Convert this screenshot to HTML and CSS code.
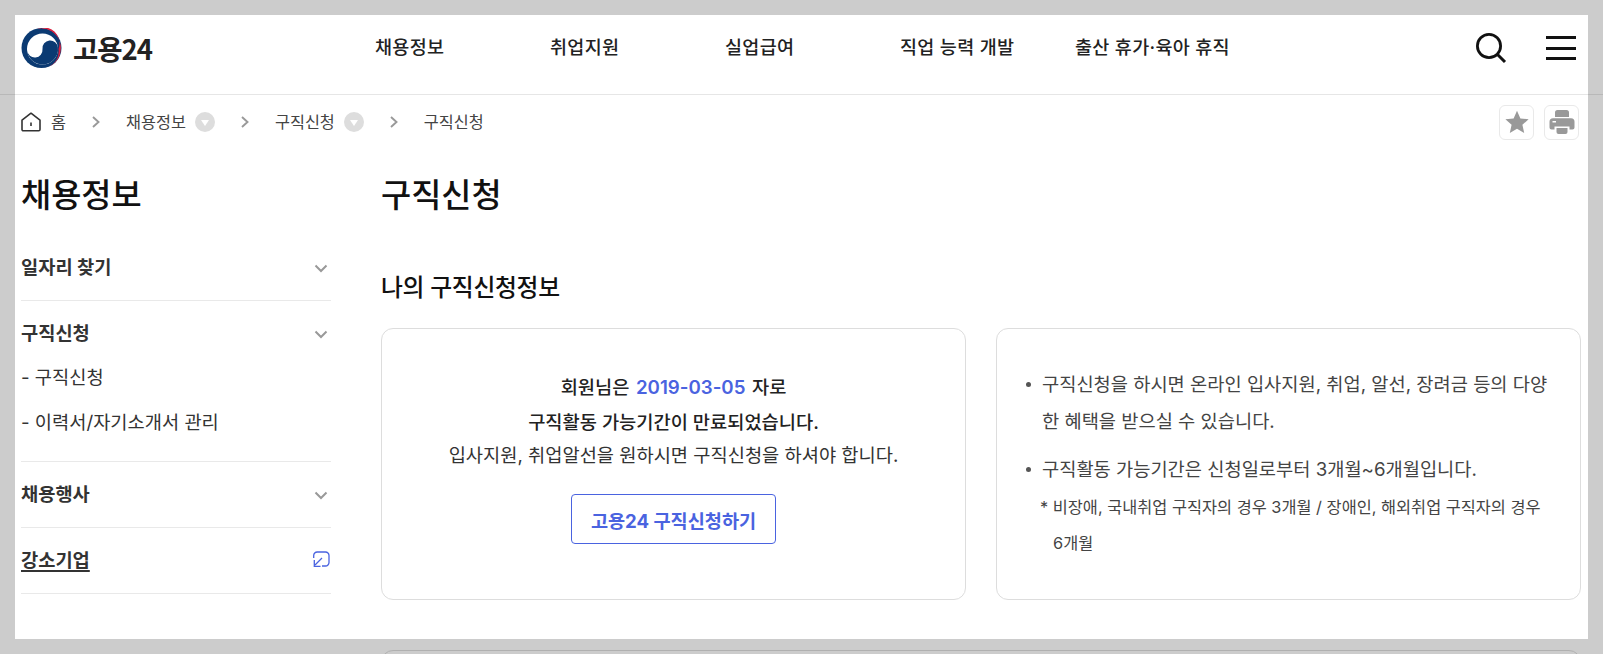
FILE: index.html
```html
<!DOCTYPE html>
<html lang="ko">
<head>
<meta charset="utf-8">
<title>구직신청 | 고용24</title>
<link rel="stylesheet" href="styles.css">
</head>
<body>
<header class="site-header">
  <a class="logo">
    <svg class="logo-mark" viewBox="0 0 40 40" aria-hidden="true">
      <circle cx="20" cy="20" r="20" fill="#0b3a72"/>
      <path d="M16 .5A20 20 0 0 1 27 38.700A16.500 16.500 0 0 0 37 21A16 16 0 0 0 16 .5Z" fill="#d9213f"/>
      <circle cx="21" cy="21" r="15.500" fill="#fff"/>
      <path d="M5.500 21A7.750 7.750 0 0 0 21 21A7.750 7.750 0 0 1 36.500 21A15.500 15.500 0 0 1 5.500 21Z" fill="#0b3a72" transform="rotate(-6 21 21)"/>
    </svg>
    <span class="logo-text">고용24</span>
  </a>
  <nav class="gnb">
    <a class="gnb-item">채용정보</a>
    <a class="gnb-item">취업지원</a>
    <a class="gnb-item">실업급여</a>
    <a class="gnb-item">직업 능력 개발</a>
    <a class="gnb-item">출산 휴가·육아 휴직</a>
  </nav>
  <div class="header-tools">
    <svg class="icon-search" viewBox="0 0 32 32" aria-hidden="true"><circle cx="14" cy="14" r="11.600" fill="none" stroke="#111" stroke-width="2.800"/><path d="M22.500 22.500L30 30" stroke="#111" stroke-width="3" fill="none"/></svg>
    <div class="hamburger"><i></i><i></i><i></i></div>
  </div>
</header>

<div class="crumb-bar">
  <div class="crumbs">
    <svg class="icon-home" viewBox="0 0 20 20" aria-hidden="true"><path d="M1 8.200L10 1.200L19 8.200V17.500A1.300 1.300 0 0 1 17.700 18.800H2.300A1.300 1.300 0 0 1 1 17.500Z" fill="none" stroke="#333" stroke-width="1.600" stroke-linejoin="round"/><path d="M10 10.500V14" stroke="#333" stroke-width="1.600"/></svg>
    <span class="crumb crumb-home">홈</span>
    <svg class="chev" viewBox="0 0 8 12" aria-hidden="true"><path d="M1 1L6.500 6L1 11" fill="none" stroke="#999" stroke-width="1.900"/></svg>
    <span class="crumb">채용정보</span><span class="crumb-dot"></span>
    <svg class="chev" viewBox="0 0 8 12" aria-hidden="true"><path d="M1 1L6.500 6L1 11" fill="none" stroke="#999" stroke-width="1.900"/></svg>
    <span class="crumb">구직신청</span><span class="crumb-dot"></span>
    <svg class="chev" viewBox="0 0 8 12" aria-hidden="true"><path d="M1 1L6.500 6L1 11" fill="none" stroke="#999" stroke-width="1.900"/></svg>
    <span class="crumb">구직신청</span>
  </div>
  <div class="crumb-actions">
    <button class="tool-btn"><svg viewBox="0 0 24 24" width="24" height="24" aria-hidden="true"><path d="M12 .8L15.400 8.500L23.600 9.300L17.400 14.800L19.200 23L12 18.700L4.800 23L6.600 14.800L.4 9.300L8.600 8.500Z" fill="#999"/></svg></button>
    <button class="tool-btn"><svg viewBox="0 0 26 26" width="26" height="26" aria-hidden="true"><path d="M6 8V3.500A2.500 2.500 0 0 1 8.500 1H17.500A2.500 2.500 0 0 1 20 3.500V8Z" fill="#999"/><path fill-rule="evenodd" d="M4 9.200H22A3.500 3.500 0 0 1 25.500 12.700V18.500A2 2 0 0 1 23.500 20.500H20.500V17.500H5.500V20.500H2.500A2 2 0 0 1 .5 18.500V12.700A3.500 3.500 0 0 1 4 9.200ZM3.500 12V13.500H7V12Z" fill="#999"/><path d="M7.500 19H18.500V23A2 2 0 0 1 16.500 25H9.500A2 2 0 0 1 7.500 23Z" fill="#999"/></svg></button>
  </div>
</div>

<div class="layout">
  <aside class="side">
    <h2 class="side-title">채용정보</h2>
    <ul class="side-menu">
      <li class="side-group">
        <div class="side-head">일자리 찾기<svg class="side-chev" viewBox="0 0 14 9" aria-hidden="true"><path d="M1.500 1.500L7 7L12.500 1.500" fill="none" stroke="#999" stroke-width="2"/></svg></div>
      </li>
      <li class="side-group side-open">
        <div class="side-head">구직신청<svg class="side-chev" viewBox="0 0 14 9" aria-hidden="true"><path d="M1.500 1.500L7 7L12.500 1.500" fill="none" stroke="#999" stroke-width="2"/></svg></div>
        <a class="side-sub">- 구직신청</a>
        <a class="side-sub">- 이력서/자기소개서 관리</a>
      </li>
      <li class="side-group">
        <div class="side-head">채용행사<svg class="side-chev" viewBox="0 0 14 9" aria-hidden="true"><path d="M1.500 1.500L7 7L12.500 1.500" fill="none" stroke="#999" stroke-width="2"/></svg></div>
      </li>
      <li class="side-group">
        <div class="side-head"><u>강소기업</u><svg class="side-ext" viewBox="0 0 17 17" aria-hidden="true"><path d="M.7 7V4.500A3.500 3.500 0 0 1 4.200 1H12.500A3.500 3.500 0 0 1 16 4.500V11.500A3.500 3.500 0 0 1 12.500 15H9" fill="none" stroke="#4a63e0" stroke-width="1.300"/><path d="M9 7L2 14M1.300 9V15.300H7.500" fill="none" stroke="#4a63e0" stroke-width="1.300"/></svg></div>
      </li>
    </ul>
  </aside>
  <main class="main">
    <h1 class="page-title">구직신청</h1>
    <h3 class="section-title">나의 구직신청정보</h3>
    <div class="cards">
      <section class="card card-status">
        <p class="status-strong">회원님은 <em>2019-03-05</em> 자로</p>
        <p class="status-strong">구직활동 가능기간이 만료되었습니다.</p>
        <p class="status-note">입사지원, 취업알선을 원하시면 구직신청을 하셔야 합니다.</p>
        <a class="apply-btn">고용24 구직신청하기</a>
      </section>
      <section class="card card-info">
        <ul class="info-list">
          <li>구직신청을 하시면 온라인 입사지원, 취업, 알선, 장려금 등의 다양한 혜택을 받으실 수 있습니다.</li>
          <li>구직활동 가능기간은 신청일로부터 3개월~6개월입니다.
            <p class="info-note">* 비장애, 국내취업 구직자의 경우 3개월 / 장애인, 해외취업 구직자의 경우 6개월</p>
          </li>
        </ul>
      </section>
    </div>
    <section class="card card-next"></section>
  </main>
</div>
<div class="dim-frame"></div>
</body>
</html>
```

FILE: styles.css
```css
* { box-sizing: border-box; }
html, body { margin: 0; padding: 0; height: 654px; overflow: hidden; }
body {
  background: #fff;
  color: #222;
  font-family: Inter, "Noto Sans CJK KR", "Noto Sans", sans-serif;
  position: relative;
}
p, h1, h2, h3, ul { margin: 0; padding: 0; }
ul { list-style: none; }

.site-header {
  height: 95px;
  border-bottom: 1px solid #e6e6e6;
  padding: 28px 27px 0 21px;
  display: flex;
  align-items: flex-start;
}
.logo { display: flex; align-items: center; width: 354px; height: 40px; }
.logo-mark { width: 41px; height: 40px; }
.logo-text { margin-left: 11px; font-family: "Noto Sans CJK KR", sans-serif; font-size: 27.500px; font-weight: 700; letter-spacing: -1px; color: #222; line-height: 38px; }
.gnb { display: flex; height: 38px; align-items: center; flex: 1; }
.gnb-item { width: 175px; font-size: 18.500px; font-weight: 500; color: #222; letter-spacing: .3px; line-height: 38px; white-space: nowrap; }
.header-tools { display: flex; align-items: flex-start; gap: 39px; }
.icon-search { width: 32px; height: 32px; margin-top: 4px; display: block; }
.hamburger { width: 30px; margin-top: 8px; display: flex; flex-direction: column; gap: 7.500px; }
.hamburger i { display: block; height: 3px; background: #111; }

.crumb-bar { height: 54px; padding: 0 24px 0 21px; display: flex; justify-content: space-between; align-items: center; }
.crumbs { display: flex; align-items: center; }
.icon-home { width: 20px; height: 20px; margin-right: 10px; }
.crumb { font-size: 16.300px; color: #444; line-height: 22px; }
.crumb-home { width: 41px; }
.chev { width: 8px; height: 12px; margin-right: 26px; }
.crumb-dot { width: 20px; height: 20px; border-radius: 50%; background: #ddd; margin: 0 26px 0 9px; display: flex; align-items: center; justify-content: center; }
.crumb-dot::after { content: ""; border: 4.500px solid transparent; border-top: 6px solid #fff; border-bottom: 0; margin-top: 2px; }
.crumb-actions { display: flex; gap: 10px; }
.tool-btn { width: 35px; height: 35px; padding: 0; background: #fff; border: 1px solid #e9e9e9; border-radius: 6px; display: flex; align-items: center; justify-content: center; }

.layout { display: flex; padding: 0 22px 0 21px; gap: 50px; }
.side { width: 310px; flex: none; }
.side-title { font-size: 32.800px; font-weight: 500; color: #111; line-height: 46px; margin-top: 23px; }
.side-menu { margin-top: 22px; }
.side-group { border-bottom: 1px solid #e9e9e9; padding: 19px 0 22px; }
.side-head { display: flex; justify-content: space-between; align-items: center; padding-top: 4px; font-size: 18.700px; font-weight: 700; color: #333; line-height: 20px; height: 24px; }
.side-head u { text-underline-offset: 3px; text-decoration-thickness: 2px; }
.side-group:first-child { padding-top: 14px; }
.side-open { padding-bottom: 26px; }
.side-chev { width: 14px; height: 9px; margin: 1px 3px 0 0; }
.side-ext { width: 17px; height: 17px; margin: 0 1px 4px 0; }
.side-sub { display: block; font-size: 18.700px; color: #333; line-height: 25px; margin-top: 21px; }
.side-sub + .side-sub { margin-top: 20px; }

.main { flex: 1; min-width: 0; }
.page-title { font-size: 32.800px; font-weight: 500; color: #111; line-height: 46px; margin-top: 23px; }
.section-title { font-size: 23.800px; font-weight: 500; color: #111; line-height: 32px; margin-top: 54px; letter-spacing: -.3px; }
.cards { display: grid; grid-template-columns: 1fr 1fr; gap: 30px; margin-top: 24px; }
.card { border: 1px solid #ddd; border-radius: 12px; height: 272px; }
.card-status { display: flex; flex-direction: column; align-items: center; padding-top: 41px; }
.status-strong { font-size: 18.700px; font-weight: 500; color: #222; line-height: 35px; }
.status-strong em { font-style: normal; color: #4a63e0; font-weight: 600; margin: 0 1.500px; }
.status-note { font-size: 18.700px; color: #333; line-height: 32px; }
.apply-btn { margin-top: 22px; width: 205px; height: 50px; border: 1px solid #4a63e0; border-radius: 4px; color: #4a63e0; font-size: 18.600px; font-weight: 700; display: flex; align-items: center; justify-content: center; }
.card-info { padding: 38px 30px 0 29px; }
.info-list li { position: relative; padding-left: 16px; font-size: 18.700px; line-height: 36.500px; color: #444; margin-bottom: 12px; }
.info-list li::before { content: ""; position: absolute; left: 0; top: 15px; width: 5px; height: 5px; border-radius: 50%; background: #555; }
.info-note { font-size: 16.350px; line-height: 36px; color: #444; padding-left: 11px; text-indent: -13px; word-break: keep-all; }
.card-next { margin-top: 50px; }

.dim-frame { position: absolute; left: 15px; top: 15px; width: 1573px; height: 624px; box-shadow: 0 0 0 60px rgba(0, 0, 0, .2); pointer-events: none; }
```
